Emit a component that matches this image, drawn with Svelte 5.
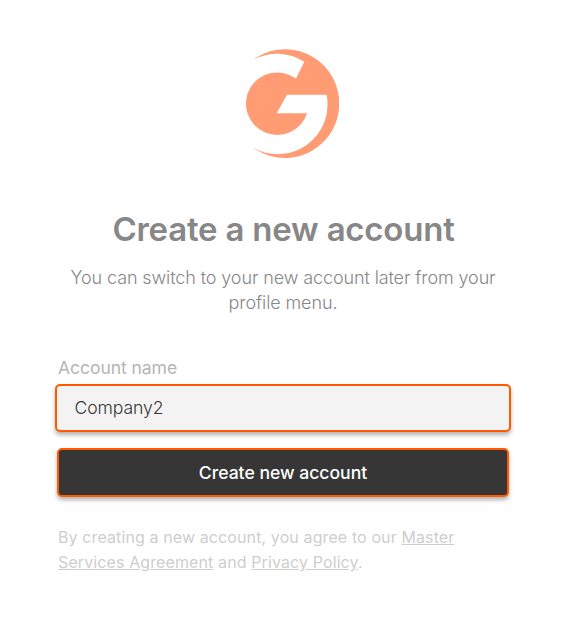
<script>
  let accountName = $state('Company2');
</script>

<main>
  <svg class="logo" width="93" height="109" viewBox="10 9 93 109" aria-hidden="true">
    <path
      fill="#ff9c73"
      d="M16.5 20.1A54.3 54.3 0 1 1 16.5 107.1A49.6 49.6 0 0 0 90.6 54.7H51L40.7 73.2H71.1A31.3 31.3 0 1 1 60 38.6L68.3 21.7A50.2 50.2 0 0 0 16.5 20.1Z"
    />
  </svg>
  <h1>Create a new account</h1>
  <p class="intro">You can switch to your new account later from your profile menu.</p>
  <form onsubmit={(e) => e.preventDefault()}>
    <label for="account">Account name</label>
    <input id="account" type="text" bind:value={accountName} />
    <button type="submit">Create new account</button>
  </form>
  <p class="terms">
    By creating a new account, you agree to our <a href="#msa">Master Services Agreement</a> and
    <a href="#privacy">Privacy Policy</a>.
  </p>
</main>

<style>
  :global(body) {
    margin: 0;
    background: #fff;
  }
  main {
    box-sizing: border-box;
    width: 566px;
    height: 624px;
    padding: 49px 57px 0 58px;
    display: flex;
    flex-direction: column;
    font-family: Inter, sans-serif;
    color: #878787;
  }
  .logo {
    display: block;
    margin-left: 188px;
    flex: none;
  }
  h1 {
    margin: 51px 0 0;
    font-size: 33px;
    line-height: 41px;
    font-weight: 600;
    letter-spacing: -0.22px;
    text-align: center;
  }
  .intro {
    margin: 15px 1px 0 0;
    font-size: 18px;
    line-height: 25px;
    font-weight: 300;
    letter-spacing: -0.11px;
    text-align: center;
  }
  form {
    display: flex;
    flex-direction: column;
    margin-top: 41px;
  }
  label {
    font-size: 17.6px;
    line-height: 24px;
    letter-spacing: -0.1px;
    color: #b5b5b5;
  }
  input,
  button {
    box-sizing: border-box;
    height: 49px;
    border: 2px solid #ff5a00;
    border-radius: 5px;
    box-shadow: 0 3px 4px rgba(0, 0, 0, 0.3);
    font-family: inherit;
    font-size: 17.6px;
    outline: none;
  }
  input {
    height: 48px;
    margin: 4px -2px 0 -3px;
    padding: 0 17.5px 1px;
    background: #f3f3f3;
    color: #363636;
    font-weight: 300;
    letter-spacing: -0.1px;
  }
  button {
    margin: 16px 0 0 -1px;
    padding: 0;
    background: #363636;
    color: #fff;
    font-weight: 500;
    letter-spacing: -0.02px;
  }
  .terms {
    margin: 28px 0 0;
    font-size: 16px;
    line-height: 25px;
    letter-spacing: 0.11px;
    color: #cecece;
  }
  a {
    color: inherit;
    text-decoration: underline;
  }
</style>
